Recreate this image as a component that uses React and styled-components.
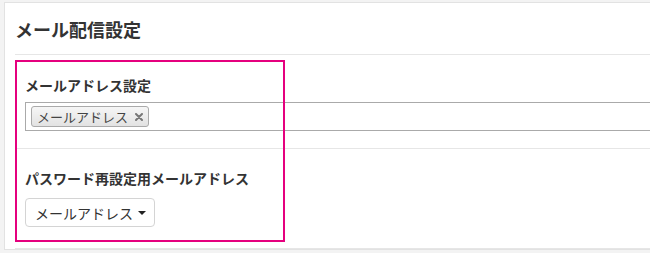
import styled, { createGlobalStyle } from 'styled-components';

const GlobalStyle = createGlobalStyle`
  html, body {
    margin: 0;
    padding: 0;
    background: #f3f3f3;
    overflow: hidden;
  }
  body {
    font-family: "Noto Sans CJK JP", "Noto Sans", sans-serif;
    color: #333;
  }
`;

const Card = styled.div`
  position: relative;
  margin: 2px 0 0 4px;
  width: 760px;
  background: #fff;
  border: 1px solid #e2e2e2;
  border-right: none;
  padding-left: 10px;
`;

const Header = styled.div`
  padding: 13px 0 11px;
  border-bottom: 1px solid #e6e6e6;
`;

const Title = styled.h2`
  margin: 0;
  font-size: 18px;
  line-height: 27px;
  font-weight: bold;
  color: #333;
`;

const Section = styled.div`
  padding: ${(p) => p.$top}px 0 ${(p) => p.$bottom}px 10px;
  border-bottom: 1px solid #e6e6e6;
`;

const Label = styled.div`
  font-size: 14px;
  line-height: 20px;
  font-weight: bold;
  color: #333;
  margin-bottom: ${(p) => p.$gap}px;
`;

const TagInput = styled.div`
  display: flex;
  align-items: center;
  height: 27px;
  padding: 0 5px;
  border: 1px solid #aaa;
  background: #fff;
`;

const Tag = styled.span`
  display: inline-flex;
  align-items: center;
  gap: 7px;
  height: 19px;
  padding: 0 5px;
  border: 1px solid #aaa;
  border-radius: 3px;
  background: linear-gradient(#f6f6f6, #e2e2e2);
  font-size: 13px;
  color: #444;
`;

const Remove = styled.svg`
  width: 8px;
  height: 8px;
  display: block;
`;

const Dropdown = styled.button`
  display: inline-flex;
  align-items: center;
  gap: 5px;
  height: 29px;
  padding: 0 8px 0 9px;
  border: 1px solid #d4d4d4;
  border-radius: 4px;
  background: #fff;
  font-family: inherit;
  font-size: 14px;
  color: #333;
`;

const Caret = styled.span`
  width: 0;
  height: 0;
  border-left: 4px solid transparent;
  border-right: 4px solid transparent;
  border-top: 4px solid #222;
`;

const Highlight = styled.div`
  position: absolute;
  left: 10px;
  top: 57px;
  width: 266px;
  height: 178px;
  border: 2px solid #e5007e;
  pointer-events: none;
`;

export default function App() {
  return (
    <>
      <GlobalStyle />
      <Card>
        <Header>
          <Title>メール配信設定</Title>
        </Header>
        <Section $top={20} $bottom={17}>
          <Label $gap={7}>メールアドレス設定</Label>
          <TagInput>
            <Tag>
              メールアドレス
              <Remove viewBox="0 0 8 8">
                <path d="M1 1L7 7M7 1L1 7" stroke="#777" strokeWidth="2" strokeLinecap="round" />
              </Remove>
            </Tag>
          </TagInput>
        </Section>
        <Section $top={19} $bottom={21}>
          <Label $gap={10}>パスワード再設定用メールアドレス</Label>
          <Dropdown type="button">
            メールアドレス
            <Caret />
          </Dropdown>
        </Section>
        <Highlight />
      </Card>
    </>
  );
}
